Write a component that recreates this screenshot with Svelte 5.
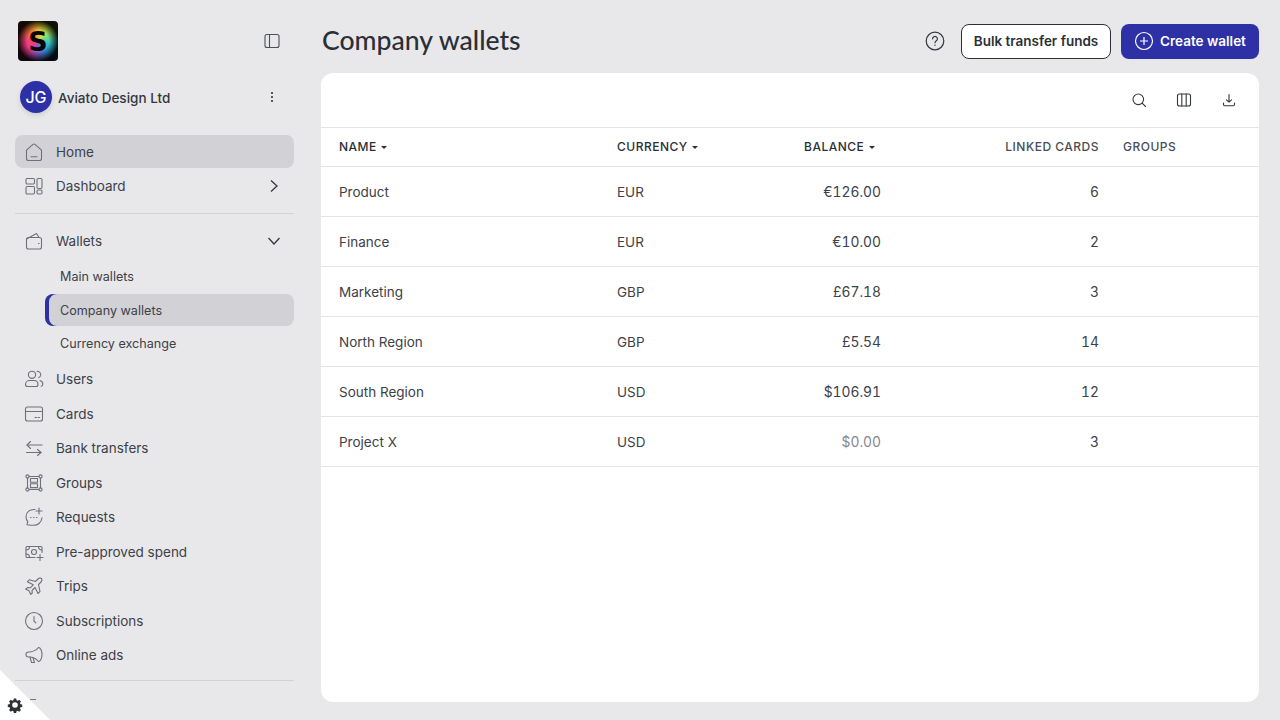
<script lang="ts">
  const wallets = [
    { name: 'Product', currency: 'EUR', balance: '€126.00', cards: 6 },
    { name: 'Finance', currency: 'EUR', balance: '€10.00', cards: 2 },
    { name: 'Marketing', currency: 'GBP', balance: '£67.18', cards: 3 },
    { name: 'North Region', currency: 'GBP', balance: '£5.54', cards: 14 },
    { name: 'South Region', currency: 'USD', balance: '$106.91', cards: 12 },
    { name: 'Project X', currency: 'USD', balance: '$0.00', cards: 3, empty: true }
  ];

  const lowerNav = [
    { label: 'Users', icon: 'users' },
    { label: 'Cards', icon: 'cards' },
    { label: 'Bank transfers', icon: 'transfers' },
    { label: 'Groups', icon: 'groups' },
    { label: 'Requests', icon: 'requests' },
    { label: 'Pre-approved spend', icon: 'spend' },
    { label: 'Trips', icon: 'trips' },
    { label: 'Subscriptions', icon: 'subscriptions' },
    { label: 'Online ads', icon: 'ads' }
  ];
</script>

{#snippet navIcon(name)}
  <svg class="nav-icon" viewBox="0 0 20 20" width="20" height="20">
    {#if name === 'home'}
      <path d="M2.500 8.200 9 2.400a1.500 1.500 0 0 1 2 0l6.500 5.800v8.300a2 2 0 0 1-2 2h-11a2 2 0 0 1-2-2z" />
      <path d="M7 14.800h6" />
    {:else if name === 'dashboard'}
      <rect x="2" y="2.500" width="8.500" height="5.500" rx="1.200" />
      <rect x="2" y="10.500" width="8.500" height="7.500" rx="1.200" />
      <rect x="13" y="2.500" width="5" height="10" rx="1.200" />
      <rect x="13" y="14" width="5" height="4" rx="1.200" />
    {:else if name === 'wallet'}
      <path d="M2.500 8.500v7.500a2 2 0 0 0 2 2h11a2 2 0 0 0 2-2V8.500a2 2 0 0 0-2-2h-11a2 2 0 0 0-2 2z" />
      <path d="M2.500 8 12.500 2.500 15 6.500" />
      <path d="M14.500 12.500h.6" />
    {:else if name === 'users'}
      <circle cx="8" cy="5.800" r="3.600" />
      <path d="M1.500 15.500c0-2.500 2-4 4-4h4.500c2.500 0 4 1.800 4 4 0 1.300-.8 2-2 2H3.500c-1.300 0-2-.8-2-2z" />
      <path d="M13 2.300c3 .3 4.200 2.200 3.700 4.100-.3 1-1 1.800-2 2.200" />
      <path d="M16 11.500c1.800.6 2.800 2 2.800 3.800 0 1-.6 1.800-1.600 2" />
    {:else if name === 'cards'}
      <rect x="1.500" y="3" width="17" height="14" rx="2" />
      <path d="M1.500 7.500h17" />
      <path d="M11 13.500h1.500M14 13.500h1.500" />
    {:else if name === 'transfers'}
      <path d="M3 7h15" />
      <path d="M6.500 3.500 3 7l3.500 3.500" />
      <path d="M2.500 14.500h14.500" />
      <path d="M13.500 11.500 17 14.500l-3.500 3" />
    {:else if name === 'groups'}
      <circle cx="3.500" cy="3.500" r="1.600" />
      <circle cx="16.500" cy="3.500" r="1.600" />
      <circle cx="3.500" cy="16.500" r="1.600" />
      <circle cx="16.500" cy="16.500" r="1.600" />
      <path d="M5.100 3.500h9.800M5.100 16.500h9.800M3.500 5.100v9.800M16.500 5.100v9.800" />
      <rect x="6.500" y="5.500" width="7" height="3.800" />
      <rect x="6.500" y="10.800" width="7" height="3.800" />
    {:else if name === 'requests'}
      <path d="M11 2.500C6 2 2 5 2 9.800c0 2 .8 3.700 1.800 4.900l-.8 3c2 .3 4.500 .6 6.500 .6 4.500 0 8-3 8.500-7.500" />
      <path d="M15 1v6M12 4h6" />
      <path d="M6.500 10.500h.5M9.500 10.500h.5M12.500 10.500h.5" />
    {:else if name === 'spend'}
      <path d="M11 15.500H3a1 1 0 0 1-1-1v-9a1 1 0 0 1 1-1h14a1 1 0 0 1 1 1v5" />
      <circle cx="10" cy="10" r="2.500" />
      <path d="M2 8c2 0 3.500-1.500 3.500-3.500M14.500 4.500c0 2 1.500 3.500 3.500 3.500M2 12c2 0 3.500 1.500 3.500 3.500" />
      <path d="M16 12.500v6M13 15.500h6" />
    {:else if name === 'trips'}
      <path d="M11.500 5.500 14 3c1-1 2.800-1.200 3.500-.5s.5 2.500-.5 3.500l-2.500 2.500 1.500 7-2 2-3-6-3 3 .3 2.500-1.600 1.300-1.700-3.500-3.500-1.700L3.800 11.500l2.500.3 3-3-6-3 2-2z" />
    {:else if name === 'subscriptions'}
      <circle cx="10" cy="10" r="8.500" />
      <path d="M10 5.500V10l1.800 1.800" />
    {:else if name === 'ads'}
      <path d="M14.500 2.500c1.800 0 3.500 3 3.500 7s-1.700 7-3.500 7" />
      <path d="M14.500 2.500c-1.500 2-5 4-8.500 4.500H4.500C3 7 2 8.200 2 9.500S3 12 4.500 12H6c3.500.5 7 2.500 8.500 4.500" />
      <path d="M6 12l1.500 5.500h3L9 12.800" />
    {/if}
  </svg>
{/snippet}

<div class="page">
  <aside class="sidebar">
    <div class="brand">
      <div class="logo"><span>S</span></div>
      <svg class="collapse" viewBox="0 0 16 16" width="16" height="16">
        <rect x="1" y="1.500" width="14" height="13" rx="2" />
        <path d="M5.500 1.500v13" />
      </svg>
    </div>

    <div class="account">
      <div class="avatar">JG</div>
      <span class="account-name">Aviato Design Ltd</span>
      <svg class="more" viewBox="0 0 4 12" width="4" height="12">
        <circle cx="2" cy="2" r="1.100" />
        <circle cx="2" cy="6" r="1.100" />
        <circle cx="2" cy="10" r="1.100" />
      </svg>
    </div>

    <nav class="nav">
      <div class="item selected">{@render navIcon('home')}<span>Home</span></div>
      <div class="item">
        {@render navIcon('dashboard')}<span>Dashboard</span>
        <svg class="chev" viewBox="0 0 16 16" width="16" height="16"><path d="M5 2.500 11 8l-6 5.500" /></svg>
      </div>
      <hr />
      <div class="item">
        {@render navIcon('wallet')}<span>Wallets</span>
        <svg class="chev" viewBox="0 0 16 16" width="16" height="16"><path d="M2.500 5 8 11l5.500-6" /></svg>
      </div>
      <div class="subnav">
        <div class="sub">Main wallets</div>
        <div class="sub current">Company wallets</div>
        <div class="sub">Currency exchange</div>
      </div>
      {#each lowerNav as link}
        <div class="item">{@render navIcon(link.icon)}<span>{link.label}</span></div>
      {/each}
      <hr class="last" />
      <div class="peek"></div>
    </nav>
  </aside>

  <main class="main">
    <header class="topbar">
      <h1>Company wallets</h1>
      <div class="actions">
        <svg class="help" viewBox="0 0 20 20" width="20" height="20">
          <circle cx="10" cy="10" r="8.800" />
          <path d="M7.600 7.800a2.400 2.400 0 1 1 3.700 2c-.9.600-1.300 1-1.300 2" />
          <path d="M10 14.200v.3" />
        </svg>
        <button class="btn outline">Bulk transfer funds</button>
        <button class="btn primary">
          <svg viewBox="0 0 20 20" width="20" height="20">
            <circle cx="10" cy="10" r="8.500" />
            <path d="M10 6v8M6 10h8" />
          </svg>
          Create wallet
        </button>
      </div>
    </header>

    <section class="card">
      <div class="toolbar">
        <svg viewBox="0 0 16 16" width="16" height="16">
          <circle cx="7.300" cy="7.300" r="5.300" />
          <path d="m11.200 11.200 3.300 3.300" />
        </svg>
        <svg viewBox="0 0 16 16" width="16" height="16">
          <rect x="1.500" y="2" width="13" height="12" rx="2" />
          <path d="M5.800 2v12M10.200 2v12" />
        </svg>
        <svg viewBox="0 0 16 16" width="16" height="16">
          <path d="M8 2.500v7.500M5.500 7.800 8 10.200l2.500-2.400" />
          <path d="M2.500 11v1.500c0 .8.500 1.200 1.200 1.200h8.600c.7 0 1.200-.4 1.200-1.200V11" />
        </svg>
      </div>

      <div class="row head">
        <div>NAME <i class="caret"></i></div>
        <div>CURRENCY <i class="caret"></i></div>
        <div class="nowrap">BALANCE <i class="caret"></i></div>
        <div class="right plain">LINKED CARDS</div>
        <div class="groups plain">GROUPS</div>
      </div>
      {#each wallets as w}
        <div class="row">
          <div>{w.name}</div>
          <div>{w.currency}</div>
          <div class="right num" class:muted={w.empty}>{w.balance}</div>
          <div class="right num">{w.cards}</div>
          <div class="groups"></div>
        </div>
      {/each}
    </section>
  </main>

  <div class="corner">
    <svg viewBox="0 0 24 24" width="16" height="16">
      <path d="M10 1.500h4l.6 3 2.100.9 2.600-1.700 2.800 2.800-1.700 2.600.9 2.100 3 .6v4l-3 .6-.9 2.100 1.700 2.600-2.800 2.800-2.600-1.700-2.100.9-.6 3h-4l-.6-3-2.100-.9-2.600 1.700-2.800-2.800 1.700-2.600-.9-2.100-3-.6v-4l3-.6.9-2.100-1.700-2.600 2.800-2.800 2.600 1.700 2.100-.9z" transform="translate(12 12) scale(.88) translate(-12 -12.500)" />
      <circle cx="12" cy="12" r="4.200" />
    </svg>
  </div>
</div>

<style>
  :global(body) {
    margin: 0;
    background: #e8e8eb;
  }

  .page {
    position: relative;
    display: flex;
    height: 720px;
    overflow: hidden;
    font-family: Inter, "Liberation Sans", sans-serif;
    font-size: 13.500px;
    color: #2b2f36;
    background: #e8e8eb;
  }

  .sidebar {
    flex: 0 0 321px;
    box-sizing: border-box;
    padding: 21px 27px 0 15px;
  }

  .brand {
    display: flex;
    justify-content: space-between;
    align-items: center;
    padding: 0 14px 0 3px;
  }

  .logo {
    display: flex;
    align-items: center;
    justify-content: center;
    width: 40px;
    height: 40px;
    border-radius: 4px;
    background:
      radial-gradient(circle at 50% 50%, transparent 38%, rgba(0, 0, 0, 0.92) 72%),
      conic-gradient(from 0deg, #f0c030, #b5e050, #40d0b8, #2a9fe0, #7a60d0, #f03a90, #f0407a, #f5703a, #f0c030);
  }

  .logo span {
    font-family: "DejaVu Sans", sans-serif;
    font-weight: 700;
    font-size: 27px;
    line-height: 1;
    color: #050505;
  }

  .collapse {
    fill: none;
    stroke: #4b4f57;
    stroke-width: 1.100;
  }

  .account {
    display: flex;
    align-items: center;
    gap: 6px;
    margin-top: 20px;
    padding: 0 20px 0 5px;
  }

  .avatar {
    display: flex;
    align-items: center;
    justify-content: center;
    width: 32px;
    height: 32px;
    border-radius: 50%;
    background: #2e31a6;
    color: #fff;
    font-size: 16px;
    font-weight: 500;
    box-shadow: 0 2px 5px rgba(0, 0, 0, 0.12);
  }

  .account-name {
    flex: 1;
    padding-top: 2px;
    font-weight: 500;
    color: #33373e;
  }

  .more {
    fill: #33373e;
  }

  .nav {
    margin-top: 22px;
  }

  .item {
    display: flex;
    align-items: center;
    gap: 12px;
    height: 34.500px;
    padding: 0 12px 0 9px;
    border-radius: 8px;
    color: #3d4148;
  }

  .item.selected {
    height: 33px;
    margin-bottom: 1px;
    background: #d1d1d6;
  }

  .nav-icon {
    flex: none;
    fill: none;
    stroke: #6e7179;
    stroke-width: 1.100;
    stroke-linecap: round;
    stroke-linejoin: round;
  }

  .chev {
    margin-left: auto;
    fill: none;
    stroke: #33373e;
    stroke-width: 1.300;
  }

  hr {
    margin: 9px 0 10px;
    border: 0;
    border-top: 1px solid #d1d1d6;
  }

  hr.last {
    margin: 7px 0 0;
  }

  .peek {
    width: 6px;
    height: 1px;
    margin: 18px 0 0 15px;
    background: #777;
  }

  .subnav {
    display: flex;
    flex-direction: column;
    margin: 2px 0 2px 30px;
  }

  .sub {
    display: flex;
    align-items: center;
    box-sizing: border-box;
    height: 34px;
    padding-left: 15px;
    border-radius: 8px;
    font-size: 12.600px;
    color: #3d4148;
  }

  .sub:first-child {
    padding-bottom: 2px;
  }

  .sub.current {
    height: 32px;
    background: #d1d1d6;
    box-shadow: inset 4px 0 0 #2e31a6;
  }

  .main {
    flex: 1;
    display: flex;
    flex-direction: column;
    padding: 0 21px 18px 0;
    min-width: 0;
  }

  .topbar {
    flex: 0 0 73px;
    display: flex;
    align-items: center;
    justify-content: space-between;
    box-sizing: border-box;
    padding-top: 9px;
  }

  h1 {
    margin: 0 0 2px 1px;
    font-family: Lato, "Open Sans", sans-serif;
    font-weight: 500;
    font-size: 26.600px;
    color: #2b2f36;
  }

  .actions {
    display: flex;
    align-items: center;
    gap: 10px;
  }

  .help {
    margin-right: 6px;
    fill: none;
    stroke: #33373e;
    stroke-width: 1.200;
    stroke-linecap: round;
  }

  .btn {
    display: flex;
    align-items: center;
    gap: 6px;
    height: 35px;
    box-sizing: border-box;
    border-radius: 8px;
    font: 600 13.500px Inter, "Liberation Sans", sans-serif;
    white-space: nowrap;
  }

  .outline {
    width: 150px;
    justify-content: center;
    border: 1px solid #2b2f36;
    background: #fff;
    color: #2b2f36;
  }

  .primary {
    width: 138px;
    justify-content: center;
    border: 0;
    background: #2e31a6;
    color: #fff;
  }

  .primary svg {
    fill: none;
    stroke: #fff;
    stroke-width: 1.200;
  }

  .card {
    flex: 1;
    background: #fff;
    border-radius: 12px;
  }

  .toolbar {
    display: flex;
    justify-content: flex-end;
    align-items: center;
    gap: 29px;
    height: 54px;
    padding: 0 22px;
  }

  .toolbar svg {
    fill: none;
    stroke: #33373e;
    stroke-width: 1.100;
    stroke-linecap: round;
    stroke-linejoin: round;
  }

  .row {
    display: grid;
    grid-template-columns: 278px 187px 77px 218px 1fr;
    align-items: center;
    box-sizing: border-box;
    height: 50px;
    padding-left: 18px;
    border-bottom: 1px solid #e4e4e7;
    color: #3d4148;
  }

  .row.head {
    height: 40px;
    padding-bottom: 2px;
    border-top: 1px solid #e4e4e7;
    font-size: 12px;
    font-weight: 450;
    letter-spacing: 0.500px;
    color: #2b2f36;
  }

  .row.head .plain {
    color: #4a4e55;
  }

  .num {
    font-size: 13.800px;
    font-variant-numeric: tabular-nums;
  }

  .nowrap {
    white-space: nowrap;
  }

  .right {
    text-align: right;
  }

  .muted {
    color: #85888f;
  }

  .groups {
    padding-left: 24px;
  }

  .caret {
    display: inline-block;
    margin-left: 1px;
    vertical-align: 2px;
    border-left: 3.800px solid transparent;
    border-right: 3.800px solid transparent;
    border-top: 3.800px solid currentColor;
  }

  .corner {
    position: absolute;
    left: 0;
    bottom: 0;
    width: 50px;
    height: 50px;
    background: #fff;
    clip-path: polygon(0 0, 100% 100%, 0 100%);
  }

  .corner svg {
    position: absolute;
    left: 7px;
    bottom: 7px;
    fill: #2b2f36;
    stroke: none;
  }

  .corner circle {
    fill: #fff;
  }
</style>
